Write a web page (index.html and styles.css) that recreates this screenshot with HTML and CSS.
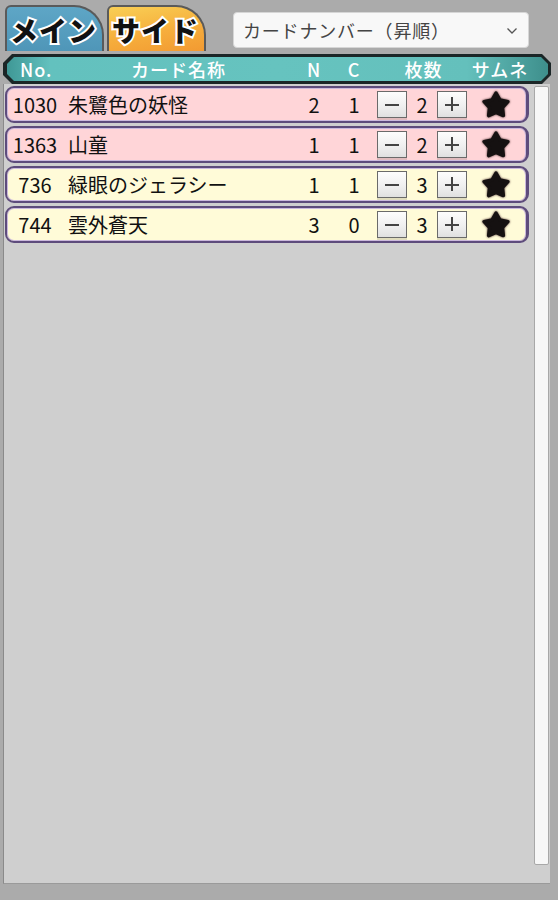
FILE: index.html
```html
<!DOCTYPE html>
<html lang="ja">
<head>
<meta charset="utf-8">
<link rel="stylesheet" href="styles.css">
</head>
<body>
<div class="app">
  <div class="top">
    <div class="tabs">
      <div class="tab tab-main"><span>メイン</span></div>
      <div class="tab tab-side"><span>サイド</span></div>
    </div>
    <div class="select">
      <span>カードナンバー（昇順）</span>
      <svg class="chev" width="12" height="8" viewBox="0 0 12 8"><path d="M1.5 1.5 L6 6 L10.5 1.5" fill="none" stroke="#555" stroke-width="1.3"/></svg>
    </div>
  </div>
  <div class="head">
    <div class="head-in">
      <div class="hc h-no">No.</div>
      <div class="hc h-name">カード名称</div>
      <div class="hc">N</div>
      <div class="hc">C</div>
      <div class="hc h-cnt">枚数</div>
      <div class="hc">サムネ</div>
    </div>
  </div>
  <div class="panel">
    <div class="list">
      <div class="row pink">
        <div class="c-no">1030</div><div class="c-name">朱鷺色の妖怪</div><div class="c-n">2</div><div class="c-n">1</div>
        <div class="c-gap"></div><div class="btn minus"></div><div class="c-n">2</div><div class="btn plus"></div>
        <div class="c-star"><svg width="32" height="32" viewBox="0 0 32 32"><path class="star" d="M16 4 L20 11 L27.89 12.64 L22.47 18.6 L23.35 26.61 L16 23.3 L8.65 26.61 L9.53 18.6 L4.11 12.64 L12 11 Z"/></svg></div>
      </div>
      <div class="row pink">
        <div class="c-no">1363</div><div class="c-name">山童</div><div class="c-n">1</div><div class="c-n">1</div>
        <div class="c-gap"></div><div class="btn minus"></div><div class="c-n">2</div><div class="btn plus"></div>
        <div class="c-star"><svg width="32" height="32" viewBox="0 0 32 32"><path class="star" d="M16 4 L20 11 L27.89 12.64 L22.47 18.6 L23.35 26.61 L16 23.3 L8.65 26.61 L9.53 18.6 L4.11 12.64 L12 11 Z"/></svg></div>
      </div>
      <div class="row yellow">
        <div class="c-no">736</div><div class="c-name">緑眼のジェラシー</div><div class="c-n">1</div><div class="c-n">1</div>
        <div class="c-gap"></div><div class="btn minus"></div><div class="c-n">3</div><div class="btn plus"></div>
        <div class="c-star"><svg width="32" height="32" viewBox="0 0 32 32"><path class="star" d="M16 4 L20 11 L27.89 12.64 L22.47 18.6 L23.35 26.61 L16 23.3 L8.65 26.61 L9.53 18.6 L4.11 12.64 L12 11 Z"/></svg></div>
      </div>
      <div class="row yellow">
        <div class="c-no">744</div><div class="c-name">雲外蒼天</div><div class="c-n">3</div><div class="c-n">0</div>
        <div class="c-gap"></div><div class="btn minus"></div><div class="c-n">3</div><div class="btn plus"></div>
        <div class="c-star"><svg width="32" height="32" viewBox="0 0 32 32"><path class="star" d="M16 4 L20 11 L27.89 12.64 L22.47 18.6 L23.35 26.61 L16 23.3 L8.65 26.61 L9.53 18.6 L4.11 12.64 L12 11 Z"/></svg></div>
      </div>
    </div>
    <div class="scroll"></div>
  </div>
</div>
</body>
</html>
```

FILE: styles.css
```css
* { box-sizing: border-box; }
html, body { margin: 0; padding: 0; }
body {
  width: 558px;
  height: 900px;
  overflow: hidden;
  background: #ababab;
  font-family: "Noto Sans CJK JP", "Noto Sans", sans-serif;
  color: #111;
}
.app { padding-top: 5px; }
.top {
  display: flex;
  align-items: flex-start;
  height: 49px;
  padding-left: 5px;
}
.tabs { display: flex; gap: 3px; }
.tab {
  width: 99px;
  height: 46px;
  border: 2px solid #5a5a5a;
  border-bottom: none;
  border-radius: 6px 30px 0 0;
  display: flex;
  align-items: flex-end;
  padding: 0 0 3px 3px;
}
.tab span {
  font-size: 28px;
  font-weight: 900;
  line-height: 36px;
  letter-spacing: 1px;
  color: #111;
  -webkit-text-stroke: 4px #fff;
  paint-order: stroke fill;
}
.tab-main { background: linear-gradient(180deg, #5ea6c6 0%, #4f96b8 100%); }
.tab-side { background: linear-gradient(170deg, #f9cf55 0%, #f6ae3c 55%, #f29a32 100%); }
.select {
  margin-left: 27px;
  margin-top: 7px;
  width: 296px;
  height: 36px;
  background: #f8f8f8;
  border: 1px solid #d6d6d6;
  border-radius: 4px;
  display: flex;
  align-items: center;
  justify-content: space-between;
  padding: 0 10px 0 9px;
  font-size: 18px;
  color: #444;
  letter-spacing: 0.8px;
}
.chev { margin-top: 1px; }
.head {
  margin-left: 3px;
  width: 548px;
  height: 30px;
  background: #1b2627;
  clip-path: polygon(9px 0, calc(100% - 9px) 0, 100% 9px, 100% calc(100% - 9px), calc(100% - 9px) 100%, 9px 100%, 0 calc(100% - 9px), 0 9px);
  padding: 3px;
}
.head-in {
  height: 24px;
  background: linear-gradient(90deg, #3f9896 0%, #63c1be 8%, #66c3bf 50%, #64c0bc 85%, #3e8f8c 100%);
  clip-path: polygon(7px 0, calc(100% - 7px) 0, 100% 7px, 100% calc(100% - 7px), calc(100% - 7px) 100%, 7px 100%, 0 calc(100% - 7px), 0 7px);
  display: grid;
  grid-template-columns: 56px 231px 40px 40px 96px 60px;
  margin-left: 1px;
  color: #fff;
  font-size: 18px;
  line-height: 24px;
  font-weight: 500;
  letter-spacing: 1px;
}
.hc { text-align: center; white-space: nowrap; }
.h-no { text-align: left; padding-left: 13px; }
.h-cnt { padding-left: 3px; }
.panel {
  margin-left: 3px;
  width: 547px;
  height: 800px;
  background: #cfcfcf;
  border-left: 1px solid #8a8a8a;
  border-bottom: 1px solid #9a9a9a;
  display: flex;
  gap: 5px;
  padding: 2px 1px 0 1px;
}
.list {
  width: 524px;
  display: flex;
  flex-direction: column;
  gap: 3px;
}
.scroll {
  width: 15px;
  height: 779px;
  background: #f7f7f7;
  border: 1px solid #a8a8a8;
  border-radius: 2px;
}
.row {
  height: 37px;
  border: 2px solid #5e4c7c;
  border-right-width: 3px;
  border-radius: 9px;
  box-shadow: inset 0 0 0 1px #cbb9dc;
  display: grid;
  grid-template-columns: 56px 231px 40px 40px 3px 30px 30px 30px 59px;
  align-items: center;
  font-size: 20px;
  line-height: 26px;
}
.pink { background: #ffd5d8; }
.yellow { background: #fffbd8; }
.c-no { text-align: center; }
.c-name { padding-left: 5px; white-space: nowrap; }
.c-n { text-align: center; }
.btn {
  position: relative;
  width: 30px;
  height: 27px;
  border: 1px solid #6a6a6a;
  background: linear-gradient(180deg, #fdfdfd 0%, #eeeeee 60%, #e0e0e0 100%);
  box-shadow: 0 2px 0 rgba(0,0,0,0.12);
}
.btn::before, .plus::after {
  content: "";
  position: absolute;
  background: #444;
}
.btn::before {
  left: 7px; right: 7px; top: 12px; height: 2px;
}
.plus::after {
  top: 5px; bottom: 6px; left: 13px; width: 2px;
}
.c-star { display: flex; justify-content: center; align-items: center; padding-right: 1px; }
.c-star svg { filter: drop-shadow(0 0 1px #4a2e2e); }
.star {
  fill: #151111;
  stroke: #151111;
  stroke-width: 3.5;
  stroke-linejoin: round;
}
```
